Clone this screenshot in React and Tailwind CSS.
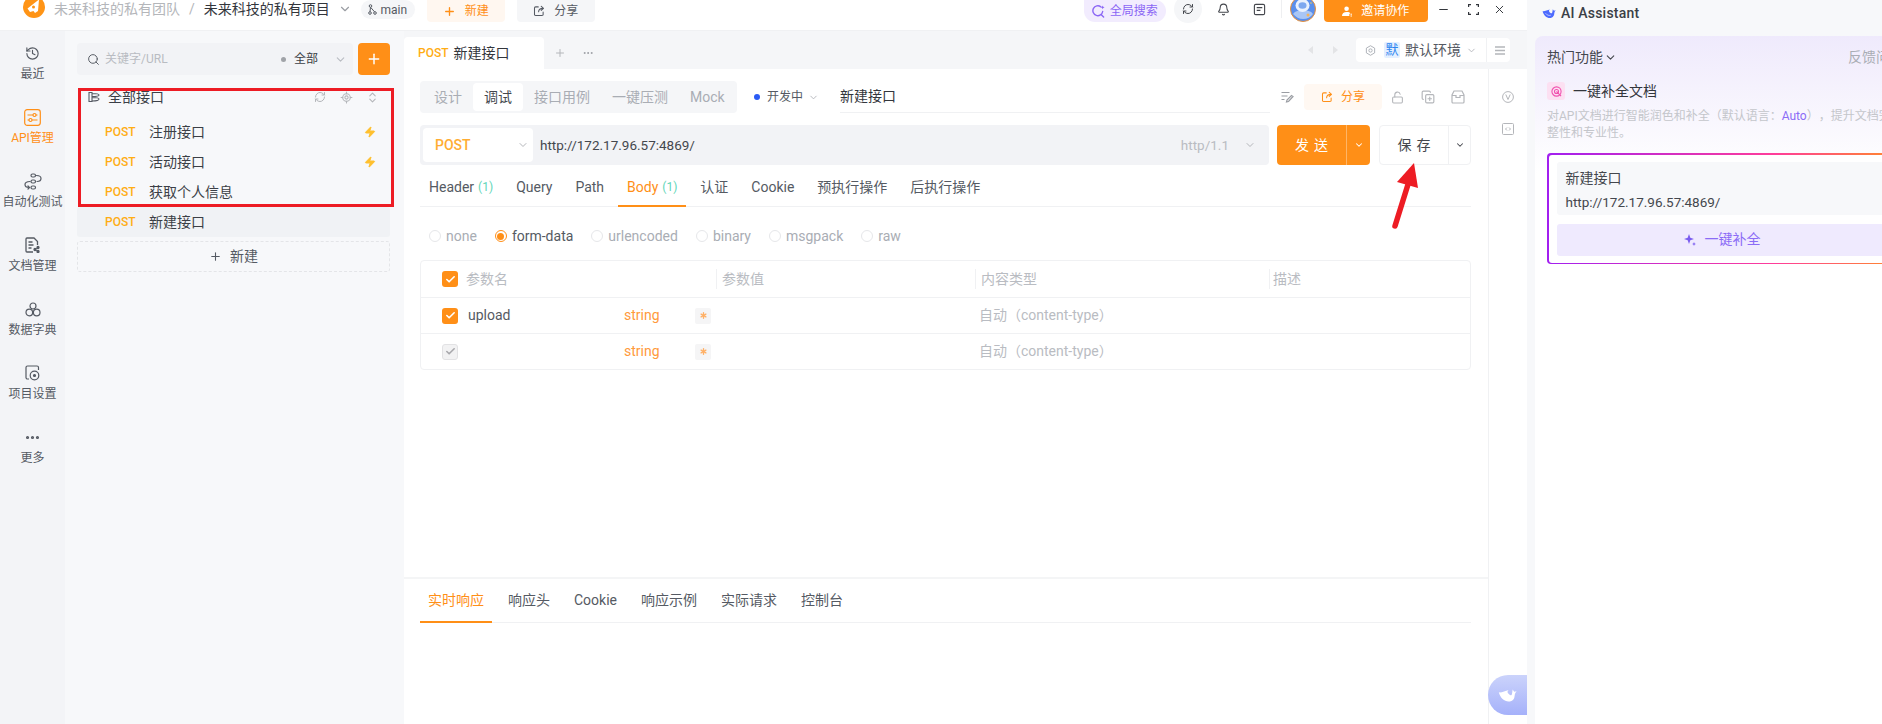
import React from "react";
import {
  Search, Plus, ChevronDown, RefreshCw, LocateFixed, ChevronsUpDown, Zap, Bell, Minus, X, LockOpen, CopyPlus, Check, Ellipsis, History, Asterisk,
} from "lucide-react";

const Rail = ({ icon, label, active }) => (
  <div className={`h-[64px] flex flex-col items-center pt-[10px] ${active ? "text-[#ff8f17]" : "text-[#555a63]"}`}>
    <div className="h-[24px] flex items-center justify-center">{icon}</div>
    <div className="text-[12px] leading-[18px] whitespace-nowrap">{label}</div>
  </div>
);

const Whale = ({ className }) => (
  <svg viewBox="0 0 24 18" className={className} fill="currentColor">
    <path d="M1 5C3 13 9 17.500 15 16.500C18 16 19.500 14 20.500 12C21.500 9 20.500 6.500 23.500 3.500L20.500 4.200L18.500 1.500L17.800 6C17.800 8.500 16 9.500 14 7.500C12 5.500 11 4 13.500 2C9 3 5 5.500 1 5Z" />
    <path d="M6 8.500C8.500 12 12 13 15 12" fill="none" stroke="#fff" strokeWidth="1.200" opacity=".8" />
  </svg>
);

const ShareIco = ({ c = "currentColor", s = 14 }) => (
  <svg width={s} height={s} viewBox="0 0 16 16" fill="none" stroke={c} strokeWidth="1.400" strokeLinecap="round" strokeLinejoin="round">
    <path d="M7 2.500H3.500a1.500 1.500 0 0 0-1.500 1.500v8.500A1.500 1.500 0 0 0 3.500 14h8.500a1.500 1.500 0 0 0 1.500-1.500V9.500" />
    <path d="M7.500 9c0-3 2-4.500 6-4.500M11 1.800l3 2.700-3 2.700" />
  </svg>
);

const PostRow = ({ name, bolt, active }) => (
  <div className={`h-[30px] flex items-center pl-[28px] pr-[14px] rounded-[3px] ${active ? "bg-[#f0f2f5]" : ""}`}>
    <span className="w-[44px] text-[12px] font-medium text-[#ffad14]">POST</span>
    <span className="text-[14px] leading-[18px] text-[#3b3f46] flex-1">{name}</span>
    {bolt && <Zap size={12} fill="#ffc02e" className="text-[#ffc02e]" />}
  </div>
);

const Tab = ({ children, active, n }) => (
  <div className={`h-[35px] pb-[4px] -mb-px px-[9px] flex items-center text-[14px] leading-[18px] border-b-2 whitespace-nowrap ${active ? "text-[#ff8f17] border-[#ff8f17]" : "text-[#555a63] border-transparent"}`}>
    {children}
    {n && <span className="ml-[4px] text-[#5fd6b8] text-[12px]">(1)</span>}
  </div>
);

const BottomTab = ({ children, active }) => (
  <div className={`h-[40px] pb-[4px] -mb-px px-[8px] flex items-center text-[14px] leading-[18px] border-b-2 whitespace-nowrap ${active ? "text-[#ff8f17] border-[#ff8f17]" : "text-[#555a63] border-transparent"}`}>
    {children}
  </div>
);

const Radio = ({ label, active }) => (
  <div className="flex items-center gap-[5px]">
    <span className={`w-[12px] h-[12px] rounded-full border flex items-center justify-center ${active ? "border-[#ff8f17]" : "border-[#e6e7ea]"}`}>
      {active && <span className="w-[7px] h-[7px] rounded-full bg-[#ff8f17]" />}
    </span>
    <span className={`text-[14px] leading-[18px] ${active ? "text-[#555a63]" : "text-[#a9adb4]"}`}>{label}</span>
  </div>
);

const Box = ({ on }) => (
  <span className={`w-[16px] h-[16px] rounded-[3px] flex items-center justify-center ${on ? "bg-[#ff8f17]" : "bg-[#f2f2f3] border border-[#e2e2e4]"}`}>
    <Check size={11} strokeWidth={3.500} className={on ? "text-white" : "text-[#a8a8ac]"} />
  </span>
);

const ParamRow = ({ on, name }) => (
  <div className="h-[36px] border-t border-[#f0f1f3] flex items-center pl-[21px]">
    <Box on={on} />
    <span className="w-[156px] ml-[10px] text-[14px] text-[#555a63]">{name}</span>
    <span className="w-[71px] text-[14px] text-[#ff9a3c]">string</span>
    <span className="w-[16px] h-[16px] bg-[#f5f5f6] rounded-[2px] flex items-center justify-center">
      <Asterisk size={11} strokeWidth={3} className="text-[#ffb066]" />
    </span>
    <span className="ml-[268px] text-[14px] text-[#b9bcc2] whitespace-nowrap">自动（content-type）</span>
  </div>
);

export default function App() {
  return (
    <div className="relative w-[1882px] h-[724px] overflow-hidden flex bg-white font-['Roboto','Noto_Sans_CJK_SC',sans-serif]">
      <div className="w-[1527px] h-full flex flex-col shrink-0">
        {/* top bar */}
        <div className="h-[31px] shrink-0 bg-white border-b border-[#f0f1f3] flex items-start relative overflow-hidden">
          <svg className="ml-[23px] -mt-[4px] shrink-0" width="22" height="22" viewBox="0 0 22 22">
            <circle cx="11" cy="11" r="11" fill="#ff9416" />
            <path d="M16 3.500L15 15l-3 2-1.500-2-3.500 1-2.500-3.500z" fill="#fff" />
            <circle cx="10.500" cy="11" r="1.500" fill="#ff9416" />
          </svg>
          <span className="ml-[9px] text-[14px] leading-[19px] text-[#b4b6ba] whitespace-nowrap">未来科技的私有团队</span>
          <span className="ml-[9px] text-[14px] leading-[19px] text-[#b4b6ba]">/</span>
          <span className="ml-[9px] text-[14px] leading-[19px] text-[#33363c] whitespace-nowrap">未来科技的私有项目</span>
          <ChevronDown size={14} className="ml-[8px] mt-[2px] text-[#9a9da3]" />
          <div className="ml-[9px] w-[54px] h-[19px] rounded-full bg-[#f5f6f8] flex items-center justify-center gap-[3px] text-[12px] text-[#555a63]">
            <svg width="9" height="11" viewBox="0 0 9 11" fill="none" stroke="#555a63" strokeWidth="1"><circle cx="2.500" cy="2" r="1.300" /><circle cx="2" cy="9" r="1.300" /><circle cx="7" cy="9" r="1.300" /><path d="M2.500 3.300L2 7.700M2.800 3.500L6.500 7.800" /></svg>
            main
          </div>
          <div className="ml-[12px] w-[78px] h-[22px] rounded-b-[4px] bg-[#fff7f0] flex items-center justify-center gap-[9px] text-[12px] text-[#ff8f17]">
            <Plus size={13} strokeWidth={2.500} />新建
          </div>
          <div className="ml-[12px] w-[78px] h-[22px] rounded-b-[4px] bg-[#f5f6f8] flex items-center justify-center gap-[9px] text-[12px] text-[#555a63]">
            <ShareIco s={12} />分享
          </div>
          <div className="ml-[489px] w-[82px] h-[22px] rounded-r-full rounded-bl-full bg-[#f2ecfe] flex items-center justify-center gap-[5px] text-[12px] text-[#8b66f5]">
            <svg width="13" height="13" viewBox="0 0 14 14" fill="none" stroke="#8b66f5" strokeWidth="1.500" strokeLinecap="round"><path d="M9.500 2A5.300 5.300 0 1 0 11.500 7M10 10.500l2.500 2.500" /><path d="M11.500 .5l.6 1.400 1.400.6-1.400.6-.6 1.400-.6-1.400-1.400-.6 1.400-.6z" fill="#8b66f5" stroke="none" /></svg>
            全局搜索
          </div>
          <div className="ml-[8px] -mt-[5px] w-[28px] h-[28px] rounded-full bg-[#f5f6f8] flex items-center justify-center">
            <RefreshCw size={12} strokeWidth={2} className="text-[#44474d]" />
          </div>
          <Bell size={13} className="ml-[15px] mt-[3px] text-[#44474d]" />
          <svg className="ml-[23px] mt-[3px]" width="13" height="13" viewBox="0 0 14 14" fill="none" stroke="#44474d" strokeWidth="1.200"><rect x="1.500" y="1.500" width="11" height="11" rx="1.500" /><path d="M4 5h6M4 8h4" /></svg>
          <span className="ml-[15px] w-px h-[18px] bg-[#eeeff1]" />
          <svg className="ml-[8px] -mt-[4px] shrink-0" width="26" height="26" viewBox="0 0 26 26">
            <circle cx="13" cy="13" r="12.500" fill="#5a8fec" stroke="#e8913a" strokeWidth="1" />
            <path d="M3 18c3 3 6 5 10 5s8-2 10-5c-2-3-6-4-10-4s-8 1-10 4z" fill="#a9c6f5" />
            <ellipse cx="12.500" cy="9.500" rx="7" ry="6.500" fill="#e9f1fd" />
            <ellipse cx="12.500" cy="9.500" rx="4" ry="3.200" fill="#7da8ef" />
            <circle cx="18" cy="19" r="1.500" fill="#f3b25a" />
            <circle cx="21" cy="7" r=".8" fill="#f3d25a" />
          </svg>
          <div className="ml-[8px] w-[104px] h-[22px] rounded-b-[4px] bg-[#ff8f17] flex items-center justify-center gap-[8px] text-[12px] text-white">
            <svg width="11" height="11" viewBox="0 0 12 12" fill="#fff"><circle cx="5" cy="3" r="2.500" /><path d="M0 11c0-3 2-4.500 5-4.500s4 .5 4 2H8v2.500z" /><circle cx="10" cy="9" r=".8" /><circle cx="10" cy="11" r=".8" /></svg>
            邀请协作
          </div>
          <Minus size={13} strokeWidth={2.200} className="ml-[9px] mt-[3px] text-[#33363c]" />
          <svg className="ml-[18px] mt-[4px]" width="11" height="11" viewBox="0 0 11 11" fill="none" stroke="#33363c" strokeWidth="1.200"><path d="M.6 3V.6H3M8 .6h2.400V3M10.400 8v2.400H8M3 10.400H.6V8" /></svg>
          <X size={13} strokeWidth={1.800} className="ml-[14px] mt-[3px] text-[#33363c]" />
        </div>

        <div className="flex-1 flex min-h-0">
          {/* rail */}
          <div className="w-[65px] shrink-0 bg-[#f3f4f7] flex flex-col">
            <Rail label="最近" icon={<History size={15} strokeWidth={1.800} />} />
            <Rail
              active
              label="API管理"
              icon={
                <svg width="17" height="17" viewBox="0 0 17 17" fill="none" stroke="#ff8f17" strokeWidth="1.200">
                  <rect x=".7" y=".7" width="15.600" height="15.600" rx="2.500" />
                  <path d="M3.500 6h5.500M12 6h1.500M3.500 11H5M8 11h5.500" />
                  <circle cx="10.500" cy="6" r="1.500" /><circle cx="6.500" cy="11" r="1.500" />
                </svg>
              }
            />
            <Rail
              label="自动化测试"
              icon={
                <svg width="18" height="17" viewBox="0 0 18 17" fill="none" stroke="#555a63" strokeWidth="1.200" strokeLinecap="round">
                  <rect x="7" y="1" width="4.500" height="3" rx="1.500" /><rect x="7" y="7" width="4.500" height="3" rx="1.500" /><rect x="7" y="13" width="4.500" height="3" rx="1.500" />
                  <path d="M12.500 2.500c3 0 4.500 1 4.500 3s-1.500 3-4 3M6 8.500c-3 0-5 1-5 3s1.500 3 4 3M4 13l1.500 1.500L4 16" />
                </svg>
              }
            />
            <Rail
              label="文档管理"
              icon={
                <svg width="15" height="16" viewBox="0 0 15 16" fill="none" stroke="#555a63" strokeWidth="1.300">
                  <path d="M8 15H2a1 1 0 0 1-1-1V2a1 1 0 0 1 1-1h7l3.500 3.500V8" />
                  <path d="M3.500 5h4M3.500 8h5M3.500 11h3" />
                  <circle cx="13" cy="10.500" r="1" fill="#555a63" /><circle cx="10" cy="12.500" r="1" fill="#555a63" /><circle cx="13" cy="14.500" r="1" fill="#555a63" />
                  <path d="M13 10.500l-3 2 3 2" strokeWidth=".8" />
                </svg>
              }
            />
            <Rail
              label="数据字典"
              icon={
                <svg width="16" height="15" viewBox="0 0 16 15" fill="none" stroke="#555a63" strokeWidth="1.200"><circle cx="8" cy="4" r="3" /><circle cx="4.300" cy="10.500" r="3.300" /><circle cx="11.700" cy="10.500" r="3.300" /></svg>
              }
            />
            <Rail
              label="项目设置"
              icon={
                <svg width="15" height="16" viewBox="0 0 15 16" fill="none" stroke="#555a63" strokeWidth="1.200"><path d="M13.500 5V2.500A1.500 1.500 0 0 0 12 1H2.500A1.500 1.500 0 0 0 1 2.500v10A1.500 1.500 0 0 0 2.500 14H4" /><circle cx="9.500" cy="10.500" r="4.300" /><circle cx="9.500" cy="10.500" r="1" fill="#555a63" /></svg>
              }
            />
            <Rail label="更多" icon={<Ellipsis size={17} strokeWidth={2.500} />} />
          </div>

          {/* sidebar */}
          <div className="w-[339px] shrink-0 bg-[#f7f8fa] pl-[12px] pr-[14px] pt-[12px]">
            <div className="flex gap-[5px]">
              <div className="flex-1 h-[32px] bg-[#f2f3f6] rounded-[4px] flex items-center pl-[10px]">
                <Search size={13} strokeWidth={1.800} className="text-[#555a63]" />
                <span className="ml-[5px] text-[12px] text-[#b9bcc2] w-[176px]">关键字/URL</span>
                <span className="w-[5px] h-[5px] rounded-full bg-[#a0a3a8]" />
                <span className="ml-[8px] text-[12px] text-[#3b3f46]">全部</span>
                <ChevronDown size={13} className="ml-[16px] text-[#b9bcc2]" />
              </div>
              <div className="w-[32px] h-[32px] rounded-[4px] bg-[#ff8f17] flex items-center justify-center">
                <Plus size={16} strokeWidth={2.200} className="text-white" />
              </div>
            </div>
            <div className="h-[30px] mt-[8px] -translate-y-[1px] flex items-center pl-[11px] pr-[11px]">
              <svg width="12" height="12" viewBox="0 0 12 12" fill="none" stroke="#555a63" strokeWidth="1.100"><path d="M1 1.500h3v9H1zM4 2.500c4 0 7 .3 7 1.500S8 5.500 4 5.500M4 6.500c4 0 7 .3 7 1.500S8 10 4 10" /></svg>
              <span className="ml-[8px] text-[14px] leading-[18px] text-[#3b3f46] flex-1">全部接口</span>
              <RefreshCw size={12} className="text-[#b4b6ba] mr-[14px]" />
              <LocateFixed size={13} className="text-[#b4b6ba] mr-[13px]" />
              <ChevronsUpDown size={13} className="text-[#b4b6ba]" />
            </div>
            <div className="mt-[4px]">
              <PostRow name="注册接口" bolt />
              <PostRow name="活动接口" bolt />
              <PostRow name="获取个人信息" />
              <PostRow name="新建接口" active />
            </div>
            <div className="mt-[4px] h-[31px] rounded-[3px] border border-dashed border-[#e4e5e8] flex items-center justify-center gap-[8px] text-[14px] text-[#555a63]">
              <Plus size={13} strokeWidth={2} />新建
            </div>
          </div>

          {/* center column: request tabs over main + strip */}
          <div className="w-[1123px] shrink-0 flex flex-col min-h-0">
            <div className="h-[38px] shrink-0 bg-[#f5f6f8] flex items-end">
              <div className="w-[140px] h-[32px] shrink-0 bg-white rounded-t-[4px] flex items-center pl-[14px] whitespace-nowrap">
                <span className="text-[#ffad14] font-medium text-[12px]">POST</span>
                <span className="ml-[5px] text-[14px] leading-[18px] text-[#33363c]">新建接口</span>
              </div>
              <div className="h-[32px] flex items-center shrink-0">
                <Plus size={12} strokeWidth={2} className="ml-[10px] text-[#b4b6ba]" />
                <Ellipsis size={12} className="ml-[16px] text-[#9a9da3]" />
              </div>
              <div className="h-[38px] flex items-center ml-[714px]">
                <span className="w-0 h-0 border-y-[4px] border-y-transparent border-r-[5px] border-r-[#e3e4e6]" />
                <span className="ml-[20px] w-0 h-0 border-y-[4px] border-y-transparent border-l-[5px] border-l-[#e3e4e6]" />
                <div className="ml-[18px] w-[154px] h-[24px] shrink-0 bg-white rounded-[4px] flex items-center pl-[9px] text-[14px] leading-[18px] text-[#555a63] whitespace-nowrap">
                  <svg width="11" height="11" viewBox="0 0 12 12" fill="none" stroke="#a9adb4" strokeWidth="1" className="shrink-0"><path d="M6 .8l4.500 2.600v5.200L6 11.200 1.500 8.600V3.400z" /><circle cx="6" cy="6" r="1.800" /></svg>
                  <span className="ml-[8px] w-[16px] h-[16px] bg-[#e4f0ff] rounded-[2px] flex items-center justify-center text-[13px] text-[#2e86f0] shrink-0">默</span>
                  <span className="ml-[5px]">默认环境</span>
                  <ChevronDown size={11} className="ml-[5px] text-[#b4b6ba] shrink-0" />
                  <span className="ml-[9px] w-px h-[24px] bg-[#f0f1f3] shrink-0" />
                  <svg className="ml-[8px] shrink-0" width="10" height="9" viewBox="0 0 10 9" stroke="#b4b6ba" strokeWidth="1.400"><path d="M0 1h10M0 4.500h10M0 8h10" /></svg>
                </div>
              </div>
            </div>

            <div className="flex-1 min-h-0 flex">
              <div className="w-[1084px] shrink-0 flex flex-col bg-white px-[16px] pt-[12px]">
                <div className="h-[32px] flex items-center shrink-0">
                  <div className="w-[317px] h-[32px] bg-[#f5f6f8] rounded-[4px] flex items-center pl-[3px] text-[14px] text-[#a9adb4] whitespace-nowrap">
                    <span className="px-[11px]">设计</span>
                    <span className="px-[11px] h-[28px] flex items-center rounded-[4px] bg-white text-[#44474d]">调试</span>
                    <span className="px-[11px]">接口用例</span>
                    <span className="px-[11px]">一键压测</span>
                    <span className="px-[11px]">Mock</span>
                  </div>
                  <span className="ml-[17px] w-[6px] h-[6px] rounded-full bg-[#2a5bf5]" />
                  <span className="ml-[7px] text-[12px] text-[#555a63] whitespace-nowrap">开发中</span>
                  <ChevronDown size={11} className="ml-[5px] text-[#b4b6ba]" />
                  <div className="ml-[21px] w-[430px] h-[32px] border-b border-[#f0f1f3] flex items-center text-[14px] text-[#33363c]">新建接口</div>
                  <svg className="ml-[11px]" width="13" height="12" viewBox="0 0 13 12" fill="none" stroke="#9a9da3" strokeWidth="1.200"><path d="M.5 1.500h8M.5 5h6M.5 8.500h3M12 5.500L7.500 10.500l-2 .5.5-2 4.500-4.500z" /></svg>
                  <div className="ml-[10px] w-[78px] h-[26px] rounded-[4px] bg-[#fff8f2] flex items-center justify-center gap-[8px] text-[12px] text-[#ff8f17]">
                    <ShareIco s={12} />分享
                  </div>
                  <LockOpen size={13} className="ml-[9px] text-[#b4b6ba]" />
                  <CopyPlus size={14} className="ml-[17px] text-[#b4b6ba]" />
                  <svg className="ml-[16px]" width="14" height="14" viewBox="0 0 14 14" fill="none" stroke="#b4b6ba" strokeWidth="1.200"><path d="M3 1h8l2 4v7a1 1 0 0 1-1 1H2a1 1 0 0 1-1-1V5zM1 5.500h4v2h4v-2h4" /></svg>
                </div>

                <div className="mt-[12px] h-[40px] flex shrink-0">
                  <div className="w-[849px] bg-[#f2f3f6] rounded-[4px] flex items-center pl-[3px] pr-[13px]">
                    <div className="w-[110px] h-[34px] bg-white rounded-[4px] flex items-center pl-[12px] text-[14px] text-[#ffad33] font-medium">
                      POST
                      <ChevronDown size={12} className="ml-[46px] text-[#b4b6ba]" />
                    </div>
                    <span className="ml-[7px] text-[13.500px] text-[#44474d] flex-1">http://172.17.96.57:4869/</span>
                    <span className="text-[13.500px] text-[#b9bcc2]">http/1.1</span>
                    <ChevronDown size={12} className="ml-[15px] text-[#b4b6ba]" />
                  </div>
                  <div className="ml-[8px] w-[93px] bg-[#ff8f17] rounded-[4px] flex text-white">
                    <div className="w-[69px] flex items-center justify-center text-[14px] tracking-[5px] pl-[5px]">发送</div>
                    <div className="flex-1 border-l border-[#ffb566] flex items-center justify-center"><ChevronDown size={10} strokeWidth={2.500} /></div>
                  </div>
                  <div className="ml-[9px] w-[92px] border border-[#f0f1f3] rounded-[4px] flex text-[#44474d]">
                    <div className="w-[68px] flex items-center justify-center text-[14px] tracking-[5px] pl-[5px]">保存</div>
                    <div className="flex-1 border-l border-[#f0f1f3] flex items-center justify-center"><ChevronDown size={10} strokeWidth={2.500} /></div>
                  </div>
                </div>

                <div className="mt-[7px] h-[35px] border-b border-[#f0f1f3] flex gap-[5px] shrink-0 w-[1051px]">
                  <Tab n>Header</Tab>
                  <Tab>Query</Tab>
                  <Tab>Path</Tab>
                  <Tab active n>Body</Tab>
                  <Tab>认证</Tab>
                  <Tab>Cookie</Tab>
                  <Tab>预执行操作</Tab>
                  <Tab>后执行操作</Tab>
                </div>

                <div className="mt-[19px] h-[20px] pl-[9px] flex items-center gap-[18px] shrink-0">
                  <Radio label="none" />
                  <Radio label="form-data" active />
                  <Radio label="urlencoded" />
                  <Radio label="binary" />
                  <Radio label="msgpack" />
                  <Radio label="raw" />
                </div>

                <div className="mt-[14px] w-[1051px] border border-[#f0f1f3] rounded-[4px] shrink-0">
                  <div className="h-[36px] flex items-center pl-[21px] text-[14px] text-[#b9bcc2]">
                    <Box on />
                    <span className="ml-[8px] w-[250px]">参数名</span>
                    <span className="w-px h-[20px] bg-[#f0f1f3]" />
                    <span className="ml-[5px] w-[253px]">参数值</span>
                    <span className="w-px h-[20px] bg-[#f0f1f3]" />
                    <span className="ml-[5px] w-[288px]">内容类型</span>
                    <span className="w-px h-[20px] bg-[#f0f1f3]" />
                    <span className="ml-[3px]">描述</span>
                  </div>
                  <ParamRow on name="upload" />
                  <ParamRow />
                </div>

                <div className="flex-1" />
                <div className="-mx-[16px] h-[2px] bg-[#f4f5f6] shrink-0" />
                <div className="mt-[4px] h-[40px] border-b border-[#f0f1f3] flex gap-[8px] shrink-0 w-[1051px]">
                  <BottomTab active>实时响应</BottomTab>
                  <BottomTab>响应头</BottomTab>
                  <BottomTab>Cookie</BottomTab>
                  <BottomTab>响应示例</BottomTab>
                  <BottomTab>实际请求</BottomTab>
                  <BottomTab>控制台</BottomTab>
                </div>
                <div className="h-[101px] shrink-0" />
              </div>

              {/* right strip */}
              <div className="w-[39px] shrink-0 bg-white border-l border-[#f0f1f3] flex flex-col items-center pt-[22px] gap-[20px]">
                <svg width="12" height="12" viewBox="0 0 12 12" fill="none" stroke="#b4b6ba" strokeWidth="1"><circle cx="6" cy="6" r="5.400" /><path d="M3.800 3.500L6 8.500l2.200-5" /></svg>
                <svg width="12" height="12" viewBox="0 0 12 12" fill="none" stroke="#b4b6ba" strokeWidth="1"><rect x=".5" y=".5" width="11" height="11" rx="1" /><path d="M5 4.500L3.500 6 5 7.500M7 4.500L8.500 6 7 7.500" /></svg>
              </div>
            </div>
          </div>
        </div>
      </div>

      {/* AI panel */}
      <div className="flex-1 min-w-0 bg-[#f7f8fa] pl-[8px] overflow-hidden">
        <div className="h-[36px] flex items-start pl-[7px] pt-[4px]">
          <Whale className="w-[14px] h-[11px] mt-[4px] text-[#4d6bfe]" />
          <span className="ml-[5px] text-[14px] leading-[18px] font-medium text-[#3b3f46] tracking-[0.2px]">AI Assistant</span>
        </div>
        <div className="w-[374px] h-[688px] rounded-t-[8px] bg-[linear-gradient(180deg,#efeafc_0%,#ffffff_20%)] px-[12px] pt-[12px]">
          <div className="flex items-center h-[18px] text-[14px] leading-[18px] whitespace-nowrap">
            <span className="text-[#44474d]">热门功能</span>
            <ChevronDown size={13} className="ml-[1px] text-[#44474d] shrink-0" />
            <span className="ml-[231px] text-[#a9adb4]">反馈问题</span>
          </div>
          <div className="mt-[16px] flex items-center h-[18px]">
            <span className="w-[18px] h-[18px] rounded-[3px] bg-[#fce0f2] flex items-center justify-center">
              <svg width="11" height="11" viewBox="0 0 12 12" fill="none" stroke="#f050ae" strokeWidth="1.200"><circle cx="6" cy="6" r="5" /><circle cx="6" cy="6" r="2.200" /><path d="M6 6l5 5" /></svg>
            </span>
            <span className="ml-[8px] text-[14px] leading-[18px] text-[#33363c]">一键补全文档</span>
          </div>
          <div className="mt-[8px] text-[12px] leading-[17px] text-[#c4c6cb] whitespace-nowrap [text-spacing-trim:space-all]">
            对API文档进行智能润色和补全（默认语言：<span className="text-[#8b6cf6]">Auto</span>），提升文档完
            <br />
            整性和专业性。
          </div>
          <div className="mt-[11px] w-[350px] h-[111px] rounded-[4px] p-[1.500px] bg-[linear-gradient(90deg,#a21ff0_0%,#ff3d9a_65%,#ff8a2a_100%)]">
            <div className="w-full h-full bg-white rounded-[3px] px-[8px] pt-[7px]">
              <div className="h-[53px] bg-[#f7f8fa] rounded-[3px] pl-[9px] pt-[4px] text-[14px] leading-[24px] text-[#44474d]">
                新建接口
                <br />
                <span className="text-[13.500px]">http://172.17.96.57:4869/</span>
              </div>
              <div className="mt-[9px] h-[32px] bg-[#efeafe] rounded-[3px] flex items-center justify-center gap-[9px] text-[14px] text-[#8b6cf6]">
                <svg width="12" height="12" viewBox="0 0 12 12" fill="#7a5cf0"><path d="M5 0l1.300 3.700L10 5 6.300 6.300 5 10 3.700 6.300 0 5l3.700-1.300zM10 8l.6 1.400L12 10l-1.400.6L10 12l-.6-1.400L8 10l1.400-.6z" /></svg>
                一键补全
              </div>
            </div>
          </div>
        </div>
      </div>

      {/* red annotation rectangle over the list */}
      <div className="absolute left-[78px] top-[88px] w-[316px] h-[119px] border-[3px] border-[#ed1c24] pointer-events-none" />
      {/* red annotation arrow */}
      <svg className="absolute left-[1385px] top-[158px] pointer-events-none" width="40" height="75" viewBox="0 0 40 75">
        <path d="M10 68L25 20" stroke="#ed1c24" strokeWidth="5.500" strokeLinecap="round" />
        <path d="M29 5L12 24l21 6z" fill="#ed1c24" />
      </svg>
      {/* floating whale button */}
      <div className="absolute left-[1488px] top-[675px] w-[39px] h-[40px] rounded-l-full bg-[linear-gradient(180deg,#cbd3fb,#a5b1fa)] flex items-center justify-center">
        <Whale className="w-[19px] h-[15px] text-white" />
      </div>
    </div>
  );
}
